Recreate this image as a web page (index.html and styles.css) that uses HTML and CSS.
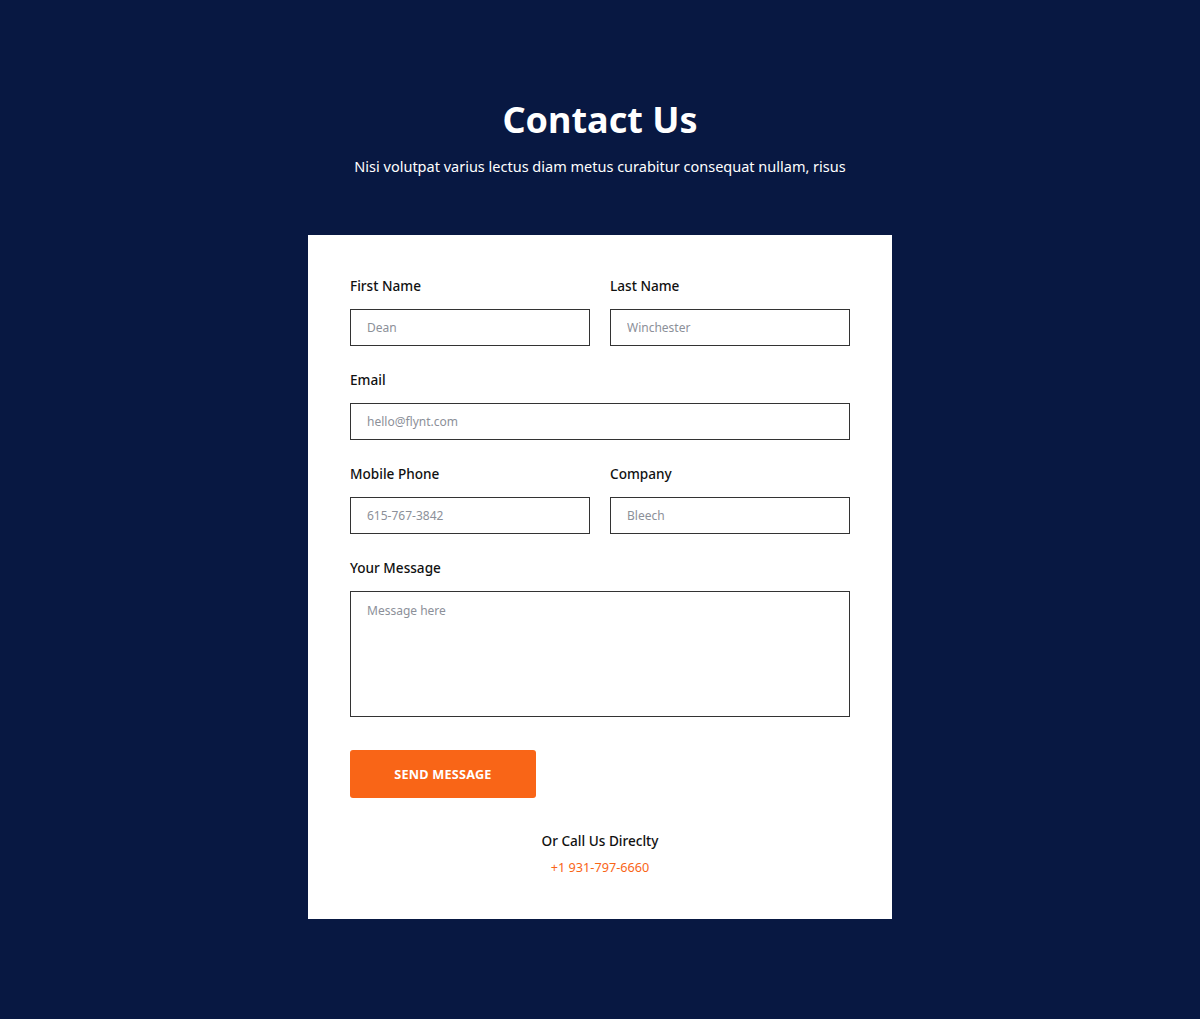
FILE: index.html
```html
<!DOCTYPE html>
<html lang="en">
<head>
  <meta charset="UTF-8" />
  <title>Contact Us</title>
  <link rel="stylesheet" href="styles.css">
</head>
<body>
  <div class="header">
    <h1>Contact Us</h1>
    <p>Nisi volutpat varius lectus diam metus curabitur consequat nullam, risus</p>
  </div>

  <form class="card">
    <div class="row">
      <div class="field">
        <label>First Name</label>
        <input type="text" placeholder="Dean">
      </div>
      <div class="field">
        <label>Last Name</label>
        <input type="text" placeholder="Winchester">
      </div>
    </div>
    <div class="field">
      <label>Email</label>
      <input type="text" placeholder="hello@flynt.com">
    </div>
    <div class="row">
      <div class="field">
        <label>Mobile Phone</label>
        <input type="text" placeholder="615-767-3842">
      </div>
      <div class="field">
        <label>Company</label>
        <input type="text" placeholder="Bleech">
      </div>
    </div>
    <div class="field message">
      <label>Your Message</label>
      <textarea placeholder="Message here"></textarea>
    </div>

    <button type="button" class="send">SEND MESSAGE</button>

    <div class="call">
      <div class="call-title">Or Call Us Direclty</div>
      <a href="#" class="phone">+1 931-797-6660</a>
    </div>
  </form>
</body>
</html>
```

FILE: styles.css
```css
body {
  margin: 0;
  background: #081842;
  font-family: "Noto Sans", sans-serif;
  color: #111;
  min-height: 1019px;
}
.header {
  text-align: center;
  color: white;
  padding-top: 97px;
}
.header h1 {
  margin: 0;
  font-size: 36px;
  line-height: 46px;
  font-weight: 700;
}
.header p {
  margin: 13px 0 0;
  font-size: 14.5px;
  line-height: 20px;
}
.card {
  width: 584px;
  box-sizing: border-box;
  margin: 59px auto 0;
  background: white;
  padding: 42px;
}
.row {
  display: flex;
  gap: 20px;
}
.row .field {
  flex: 1;
}
.field {
  display: flex;
  flex-direction: column;
  margin-bottom: 25px;
}
.field label {
  font-size: 13.6px;
  line-height: 18px;
  font-weight: 500;
  margin-bottom: 14px;
}
.field input,
.field textarea {
  box-sizing: border-box;
  width: 100%;
  height: 37px;
  border: 1px solid #333;
  border-radius: 0;
  padding: 0 16px;
  font-family: inherit;
  font-size: 12px;
  color: #333;
  outline: none;
}
.field textarea {
  height: 126px;
  padding: 10px 16px;
  resize: none;
}
::placeholder {
  color: #8c9099;
}
.field.message {
  margin-bottom: 33px;
}
.send {
  display: block;
  width: 186px;
  height: 48px;
  border: 0;
  border-radius: 3px;
  background: #f96517;
  color: white;
  font-family: inherit;
  font-size: 12.7px;
  font-weight: 700;
  letter-spacing: 0.2px;
}
.call {
  text-align: center;
  margin-top: 33px;
  line-height: 20px;
}
.call-title {
  font-size: 13.6px;
  font-weight: 500;
  margin-bottom: 5px;
}
.phone {
  font-size: 12.7px;
  color: #f96517;
  text-decoration: none;
}
```
